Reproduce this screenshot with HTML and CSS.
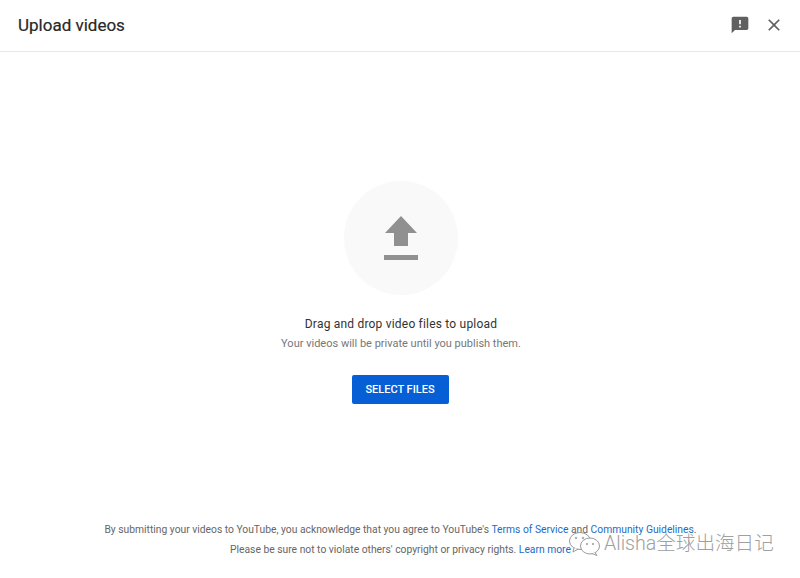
FILE: index.html
```html
<!DOCTYPE html>
<html lang="en">
<head>
<meta charset="utf-8">
<title>Upload videos</title>
<link rel="stylesheet" href="styles.css">
</head>
<body>
<div class="dialog">
  <header class="header">
    <h1 class="title">Upload videos</h1>
    <div class="actions">
      <svg class="icon-feedback" viewBox="0 0 24 24"><path d="M20 2H4c-1.100 0-2 .9-2 2v18l4-4h14c1.100 0 2-.9 2-2V4c0-1.100-.9-2-2-2zm-7 9h-2V6h2v5zm0 4h-2v-2h2v2z"/></svg>
      <svg class="icon-close" viewBox="0 0 24 24"><path d="M19 6.400 17.600 5 12 10.600 6.400 5 5 6.400 10.600 12 5 17.600 6.400 19 12 13.400 17.600 19 19 17.600 13.400 12z"/></svg>
    </div>
  </header>
  <main class="main">
    <div class="circle">
      <svg class="icon-upload" width="36" height="46" viewBox="0 0 36 46"><path d="M11 30V17H2L18 0l16 17h-9v13z"/><rect x="1" y="39" width="34" height="5"/></svg>
    </div>
    <p class="drag">Drag and drop video files to upload</p>
    <p class="private">Your videos will be private until you publish them.</p>
    <button class="select" type="button">SELECT FILES</button>
  </main>
  <footer class="footer">
    <p>By submitting your videos to YouTube, you acknowledge that you agree to YouTube's <a href="#">Terms of Service</a> and <a href="#">Community Guidelines</a>.</p>
    <p>Please be sure not to violate others' copyright or privacy rights. <a href="#">Learn more</a></p>
  </footer>
</div>
<div class="watermark">
  <svg width="34" height="26" viewBox="0 0 34 26" fill="#fff" stroke="#9a9a9a" stroke-width="1"><ellipse cx="12" cy="10" rx="10.500" ry="8.500"/><path d="M6 17l-1 4 5-3"/><ellipse cx="22" cy="15" rx="9.500" ry="8"/><path d="M27 21.500l2 3-5-2"/><circle cx="8" cy="7" r=".8"/><circle cx="15" cy="7" r=".8"/><circle cx="19" cy="13" r=".7"/><circle cx="25" cy="13" r=".7"/></svg>
  <span class="wm-text">Alisha全球出海日记</span>
</div>
</body>
</html>
```
FILE: styles.css
```css
* { box-sizing: border-box; }
html, body { margin: 0; height: 100%; }
body {
  position: relative;
  background: #fff;
  font-family: Roboto, "Noto Sans CJK SC", sans-serif;
  color: #282828;
  overflow: hidden;
}
.dialog { display: flex; flex-direction: column; height: 578px; }
.header {
  display: flex;
  align-items: center;
  justify-content: space-between;
  height: 52px;
  padding: 0 16px 2px 18px;
  border-bottom: 1px solid #e8e8e8;
  flex: none;
}
.title { margin: 0; font-size: 17px; font-weight: 400; line-height: 24px; color: #282828; -webkit-text-stroke: .2px #282828; }
.actions { display: flex; align-items: center; gap: 14px; }
.icon-feedback { width: 20px; height: 20px; fill: #606060; }
.icon-close { width: 20px; height: 20px; fill: #606060; }
.main {
  display: flex;
  flex-direction: column;
  align-items: center;
  padding: 129px 0 0 2px;
  flex: 1;
}
.circle {
  width: 114px;
  height: 114px;
  border-radius: 50%;
  background: #f9f9f9;
  display: flex;
  align-items: center;
  justify-content: center;
}
.icon-upload { fill: #909090; margin-top: 2px; }
.drag { margin: 21px 0 0; font-size: 12px; line-height: 16px; letter-spacing: .2px; color: #333; }
.private { margin: 4px 0 0; font-size: 11px; line-height: 16px; color: #777; }
.select {
  margin: 23px 2px 0 0;
  width: 97px;
  height: 29px;
  border: 0;
  border-radius: 2px;
  padding: 0;
  background: #065fd4;
  color: #fff;
  font: 500 11px/16px Roboto, sans-serif;
}
.footer {
  flex: none;
  height: 58px;
  padding-left: 1px;
  text-align: center;
  font-size: 10.300px;
  line-height: 20px;
  color: #666;
}
.footer p { margin: 0; }
.footer a { color: #1a6cc8; text-decoration: none; }
.watermark {
  position: absolute;
  left: 568px;
  top: 531px;
  display: flex;
  align-items: center;
  gap: 2px;
}
.wm-text { font-size: 19.600px; line-height: 26px; color: #a0a0a0; font-weight: 300; white-space: nowrap; }
```
